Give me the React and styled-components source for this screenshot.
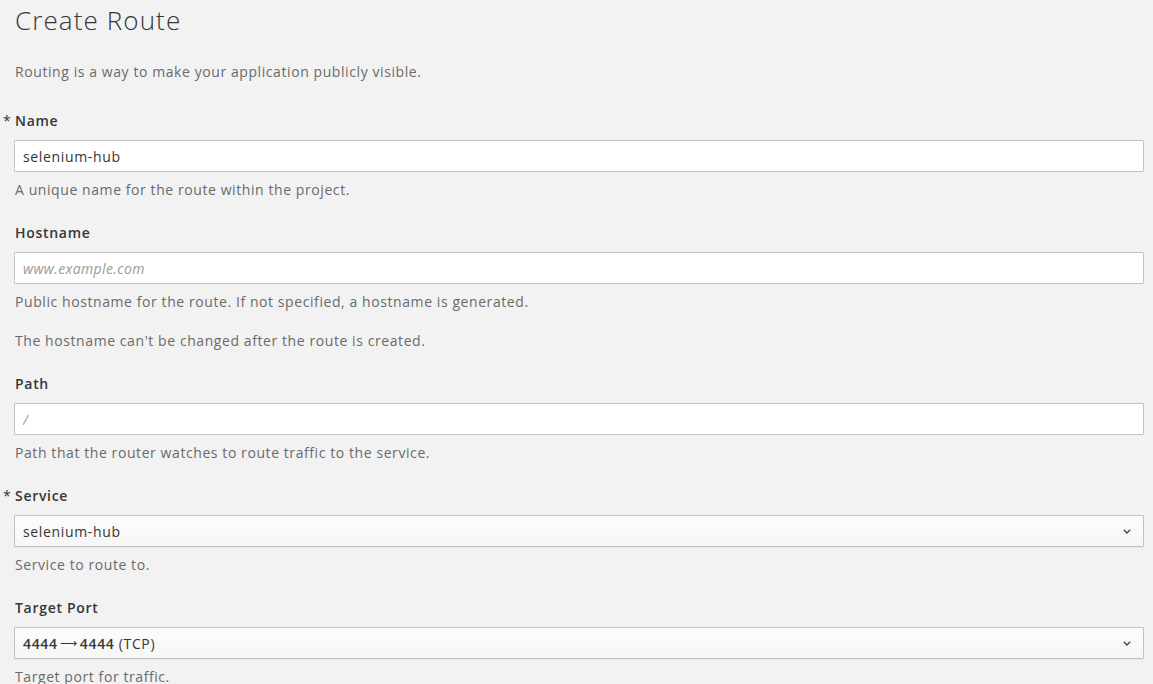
import React from 'react';
import styled, { createGlobalStyle } from 'styled-components';

const GlobalStyle = createGlobalStyle`
  html, body {
    margin: 0;
    padding: 0;
    background: #f2f2f2;
  }
  body {
    font-family: "Open Sans", "Noto Sans", sans-serif;
    color: #363636;
  }
`;

const Page = styled.div`
  padding: 0 9px 0 14px;
`;

const Title = styled.h1`
  margin: 0;
  padding-top: 2px;
  padding-left: 1px;
  font-size: 26px;
  line-height: 36px;
  font-weight: 300;
  letter-spacing: 1.1px;
  color: #363636;
`;

const Intro = styled.p`
  margin: 24px 0 0;
  padding-left: 1px;
  font-size: 14px;
  line-height: 20px;
  letter-spacing: 0.58px;
  color: #6a6a6a;
`;

const Group = styled.div`
  margin-top: ${props => props.first ? '29px' : '23px'};
`;

const Label = styled.label`
  position: relative;
  display: block;
  padding-left: 1px;
  margin-bottom: 9px;
  font-size: 14px;
  line-height: 20px;
  font-weight: 600;
  letter-spacing: 0.7px;
  color: #363636;
  ${props => props.required && `
    &::before {
      content: "*";
      position: absolute;
      left: -11px;
      top: 0;
      font-weight: 400;
    }
  `}
`;

const Input = styled.input`
  display: block;
  box-sizing: border-box;
  width: 100%;
  height: 32px;
  margin: 0;
  padding: 0 8px;
  border: 1px solid #c2c2c2;
  border-radius: 1px;
  background: #fff;
  font-family: inherit;
  font-size: 14px;
  letter-spacing: 0.65px;
  color: #363636;
  outline: none;
  &::placeholder {
    color: #9a9a9a;
    font-style: italic;
    letter-spacing: 0.4px;
  }
`;

const Select = styled.div`
  display: flex;
  align-items: center;
  justify-content: space-between;
  box-sizing: border-box;
  width: 100%;
  height: 32px;
  padding: 0 12px 0 8px;
  border: 1px solid #c2c2c2;
  border-radius: 1px;
  background: linear-gradient(#fcfcfc, #f6f6f6);
  box-shadow: 0 1px 1px rgba(0, 0, 0, 0.06);
  font-size: 14px;
  letter-spacing: 0.65px;
  color: #363636;
`;

const Value = styled.span`
  display: inline-flex;
  align-items: center;
`;

const Port = styled.span`
  font-weight: 600;
  color: #363636;
`;

const Arrow = styled.span`
  font-family: "DejaVu Sans", sans-serif;
  font-size: 12px;
  letter-spacing: 0;
  margin: 0 3px 0 2px;
`;

const Help = styled.p`
  margin: ${props => props.second ? '19px' : '8px'} 0 0;
  padding-left: 1px;
  font-size: 14px;
  line-height: 20px;
  letter-spacing: 0.58px;
  color: #6a6a6a;
`;

const Chevron = () => (
  <svg width="8" height="5" viewBox="0 0 8 5">
    <path d="M0.8 0.8 L4 4 L7.2 0.8" fill="none" stroke="#4d5258" strokeWidth="1.5" />
  </svg>
);

export default function App() {
  return (
    <Page>
      <GlobalStyle />
      <Title>Create Route</Title>
      <Intro>Routing is a way to make your application publicly visible.</Intro>

      <Group first>
        <Label required>Name</Label>
        <Input defaultValue="selenium-hub" />
        <Help>A unique name for the route within the project.</Help>
      </Group>

      <Group>
        <Label>Hostname</Label>
        <Input placeholder="www.example.com" />
        <Help>Public hostname for the route. If not specified, a hostname is generated.</Help>
        <Help second>The hostname can't be changed after the route is created.</Help>
      </Group>

      <Group>
        <Label>Path</Label>
        <Input placeholder="/" />
        <Help>Path that the router watches to route traffic to the service.</Help>
      </Group>

      <Group>
        <Label required>Service</Label>
        <Select>
          <span>selenium-hub</span>
          <Chevron />
        </Select>
        <Help>Service to route to.</Help>
      </Group>

      <Group>
        <Label>Target Port</Label>
        <Select>
          <Value><Port>4444</Port><Arrow>⟶</Arrow><Port>4444</Port>&nbsp;(TCP)</Value>
          <Chevron />
        </Select>
        <Help>Target port for traffic.</Help>
      </Group>
    </Page>
  );
}
